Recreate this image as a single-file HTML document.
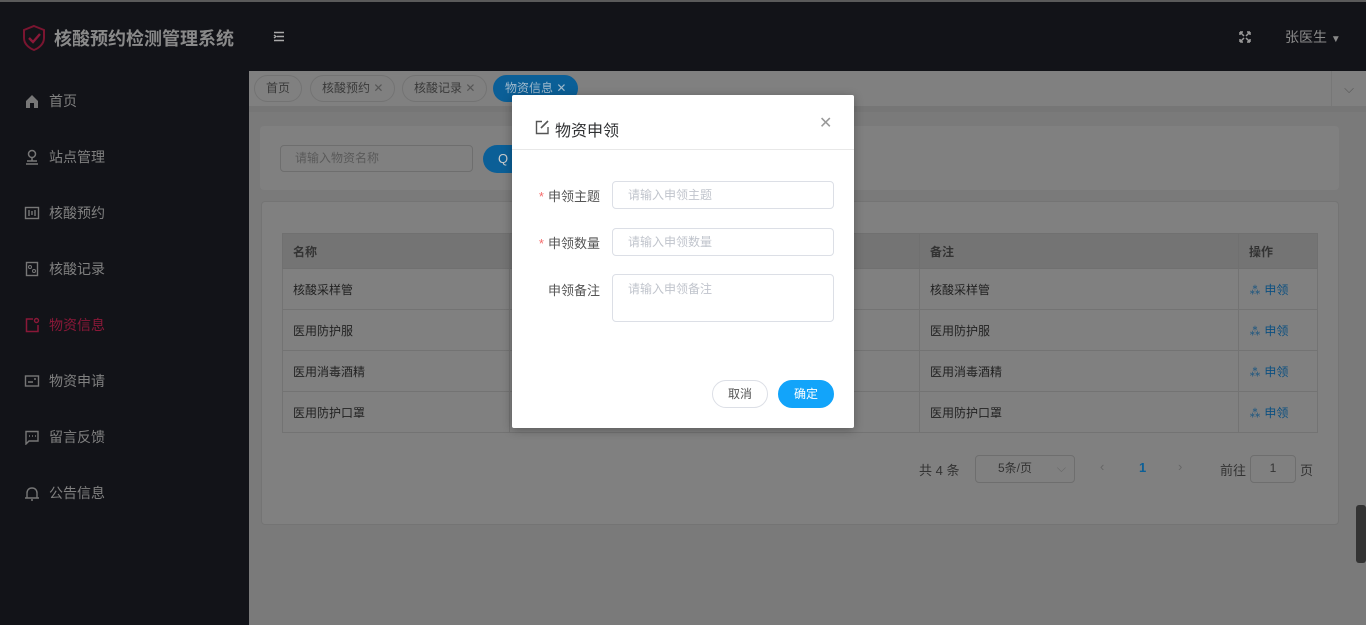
<!DOCTYPE html>
<html><head><meta charset="utf-8"><style>
*{margin:0;padding:0;box-sizing:border-box}
body{width:1366px;height:625px;overflow:hidden;background:#7a7a7a;font-family:"Liberation Sans","Noto Sans CJK SC",sans-serif;font-size:13px;position:relative;color:#2a2a2a}
.hd{position:absolute;left:0;top:0;width:1366px;height:71px;background:#121318;border-top:2px solid #5a5a5a}
.sb{position:absolute;left:0;top:71px;width:249px;height:554px;background:#121318}
.logo{position:absolute;left:20px;top:22px}
.title{position:absolute;left:54px;top:23px;color:#8a8a8a;font-size:18px;font-weight:bold}
.mi{position:absolute;left:24px;color:#808080;font-size:14px;display:flex;align-items:center}
.mi svg{margin-right:9px}
.tabs{position:absolute;left:249px;top:71px;width:1117px;height:35px;background:#808080}
.tag{position:absolute;top:4px;height:27px;border:1px solid #737373;border-radius:14px;color:#3a3a3a;font-size:12px;line-height:25px;padding:0 11px}
.card{position:absolute;background:#808080;border-radius:4px;border:1px solid #747474}
.inp{position:absolute;border:1px solid #6e6e6e;border-radius:4px;color:#5a5a5a;font-size:12px;padding-left:14px;line-height:25px}
table{position:absolute;left:282px;top:233px;width:1036px;border-collapse:collapse;font-size:12px}
td{border:1px solid #737373;height:41px;padding-left:10px;color:#222}
th{height:35px;background:#747474;border:1px solid #707070;text-align:left;padding-left:10px;color:#333;font-size:12px}
.op{color:#0b4f80}
.dlg{position:absolute;left:512px;top:95px;width:342px;height:333px;background:#fff;border-radius:2px;box-shadow:0 2px 10px rgba(0,0,0,.3)}
.lab{position:absolute;right:254px;font-size:13px;color:#555}
.lab b{color:#f56c6c;font-weight:normal;margin-right:4px}
.fi{position:absolute;left:100px;width:222px;height:28px;border:1px solid #dcdfe6;border-radius:4px;color:#c0c4cc;font-size:12px;padding-left:15px;line-height:26px}
.btn{position:absolute;top:285px;height:28px;border-radius:14px;font-size:12px;text-align:center;line-height:26px;width:56px}
</style></head><body>
<div class="hd">
<svg class="logo" width="28" height="28" viewBox="0 0 28 28"><path d="M14 2 L24 6 V14 C24 20 19 24 14 26 C9 24 4 20 4 14 V6 Z" fill="none" stroke="#7a1530" stroke-width="2"/><path d="M9 14 L13 18 L20 10" fill="none" stroke="#8a1838" stroke-width="2.4"/></svg>
<div class="title">核酸预约检测管理系统</div>
<svg style="position:absolute;left:273px;top:29px" width="12" height="11"><path d="M1 1.5H11M4 5.5H11M1 9.5H11M1 4L3 5.5L1 7" stroke="#aaa" stroke-width="1.4" fill="none"/></svg>
<svg style="position:absolute;left:1239px;top:29px" width="12" height="12"><path d="M1 1L5 5M11 1L7 5M1 11L5 7M11 11L7 7M1 1H4M1 1V4M11 1H8M11 1V4M1 11H4M1 11V8M11 11H8M11 11V8" stroke="#999" stroke-width="1.5" fill="none"/></svg>
<div style="position:absolute;left:1285px;top:25px;color:#8a8a8a;font-size:14px">张医生 <span style="font-size:10px">▼</span></div>
</div>
<div class="sb">
<div class="mi" style="top:20px"><svg width="16" height="16"><path d="M2 8L8 2L14 8V15H10V10H6V15H2Z" fill="#777"/></svg>首页</div>
<div class="mi" style="top:76px"><svg width="16" height="16"><circle cx="8" cy="5" r="3.5" fill="none" stroke="#777" stroke-width="1.5"/><path d="M8 9V12M2 15H14M3 12H13" stroke="#777" stroke-width="1.5"/></svg>站点管理</div>
<div class="mi" style="top:132px"><svg width="16" height="16"><rect x="1.5" y="2.5" width="13" height="11" fill="none" stroke="#777" stroke-width="1.4"/><path d="M5 5V11M8 6V10M11 5V11" stroke="#777" stroke-width="1.4"/></svg>核酸预约</div>
<div class="mi" style="top:188px"><svg width="16" height="16"><rect x="2.5" y="1.5" width="11" height="13" fill="none" stroke="#777" stroke-width="1.4"/><circle cx="6" cy="6" r="1.5" fill="none" stroke="#777"/><circle cx="10" cy="10" r="1.5" fill="none" stroke="#777"/></svg>核酸记录</div>
<div class="mi" style="top:244px;color:#8a1838"><svg width="16" height="16"><path d="M9 2H2.5V14.5H14V8" fill="none" stroke="#8a1838" stroke-width="1.5"/><circle cx="12.5" cy="3.5" r="2" fill="none" stroke="#8a1838" stroke-width="1.4"/></svg>物资信息</div>
<div class="mi" style="top:300px"><svg width="16" height="16"><rect x="1.5" y="3" width="13" height="10" fill="none" stroke="#777" stroke-width="1.4"/><path d="M4 9H9M10 6H12" stroke="#777" stroke-width="1.4"/></svg>物资申请</div>
<div class="mi" style="top:356px"><svg width="16" height="16"><path d="M2 2.5H14V12H5L2 15Z" fill="none" stroke="#777" stroke-width="1.4"/><path d="M5 7H6M8 7H9M11 7H12" stroke="#777" stroke-width="1.5"/></svg>留言反馈</div>
<div class="mi" style="top:412px"><svg width="16" height="16"><path d="M3 13V8C3 5 5 3 8 3C11 3 13 5 13 8V13M1 13H15M7 15H9" fill="none" stroke="#777" stroke-width="1.4"/></svg>公告信息</div>
</div>
<div class="tabs">
<div class="tag" style="left:5px">首页</div>
<div class="tag" style="left:61px">核酸预约 <span style="color:#555">✕</span></div>
<div class="tag" style="left:153px">核酸记录 <span style="color:#555">✕</span></div>
<div class="tag" style="left:244px;background:#0b5f97;border-color:#0b5f97;color:#9fb9cc">物资信息 <span>✕</span></div>
<div style="position:absolute;left:1082px;top:0;width:35px;height:35px;border-left:1px solid #777;color:#555;text-align:center;line-height:35px">⌵</div>
</div>
<div style="position:absolute;left:249px;top:106px;width:1117px;height:6px;background:#767676"></div>
<div class="card" style="left:260px;top:126px;width:1079px;height:64px;border:none"></div>
<div class="inp" style="left:280px;top:145px;width:193px;height:27px">请输入物资名称</div>
<div style="position:absolute;left:483px;top:145px;width:40px;height:28px;background:#0b5f97;border-radius:14px 0 0 14px;color:#ccc;padding-left:15px;line-height:27px">Q</div>
<div class="card" style="left:261px;top:201px;width:1078px;height:324px"></div>
<table>
<tr><th style="width:227px">名称</th><th style="width:410px"></th><th style="width:319px">备注</th><th>操作</th></tr>
<tr><td>核酸采样管</td><td></td><td>核酸采样管</td><td class="op">⁂ 申领</td></tr>
<tr><td>医用防护服</td><td></td><td>医用防护服</td><td class="op">⁂ 申领</td></tr>
<tr><td>医用消毒酒精</td><td></td><td>医用消毒酒精</td><td class="op">⁂ 申领</td></tr>
<tr><td>医用防护口罩</td><td></td><td>医用防护口罩</td><td class="op">⁂ 申领</td></tr>
</table>
<div style="position:absolute;left:919px;top:460px;color:#333">共 4 条</div>
<div class="inp" style="left:975px;top:455px;width:100px;height:28px;padding-left:22px;color:#333">5条/页 <span style="position:absolute;right:8px;color:#666">⌵</span></div>
<div style="position:absolute;left:1100px;top:459px;color:#666">‹</div>
<div style="position:absolute;left:1139px;top:460px;color:#0b5f97;font-weight:bold">1</div>
<div style="position:absolute;left:1178px;top:459px;color:#666">›</div>
<div style="position:absolute;left:1220px;top:460px;color:#333">前往</div>
<div class="inp" style="left:1250px;top:455px;width:46px;height:28px;padding:0;text-align:center;color:#333">1</div>
<div style="position:absolute;left:1300px;top:460px;color:#333">页</div>
<div style="position:absolute;left:1356px;top:505px;width:10px;height:58px;background:#333;border-radius:3px"></div>
<div class="dlg">
<svg style="position:absolute;left:22px;top:24px" width="16" height="16"><path d="M8 2.5H2.5V14.5H14V8" fill="none" stroke="#555" stroke-width="1.4"/><path d="M7 9L14 2" stroke="#555" stroke-width="1.6"/></svg>
<div style="position:absolute;left:43px;top:22px;font-size:16px;color:#303133">物资申领</div>
<div style="position:absolute;left:307px;top:18px;font-size:16px;color:#999">✕</div>
<div style="position:absolute;left:0;top:54px;width:342px;height:1px;background:#e8e8e8"></div>
<div class="lab" style="top:91px"><b>*</b>申领主题</div>
<div class="fi" style="top:86px">请输入申领主题</div>
<div class="lab" style="top:138px"><b>*</b>申领数量</div>
<div class="fi" style="top:133px">请输入申领数量</div>
<div class="lab" style="top:185px">申领备注</div>
<div class="fi" style="top:179px;height:48px;line-height:28px">请输入申领备注</div>
<div class="btn" style="left:200px;border:1px solid #dcdfe6;color:#555">取消</div>
<div class="btn" style="left:266px;background:#12a4fa;color:#fff;border:1px solid #12a4fa">确定</div>
</div>
</body></html>
